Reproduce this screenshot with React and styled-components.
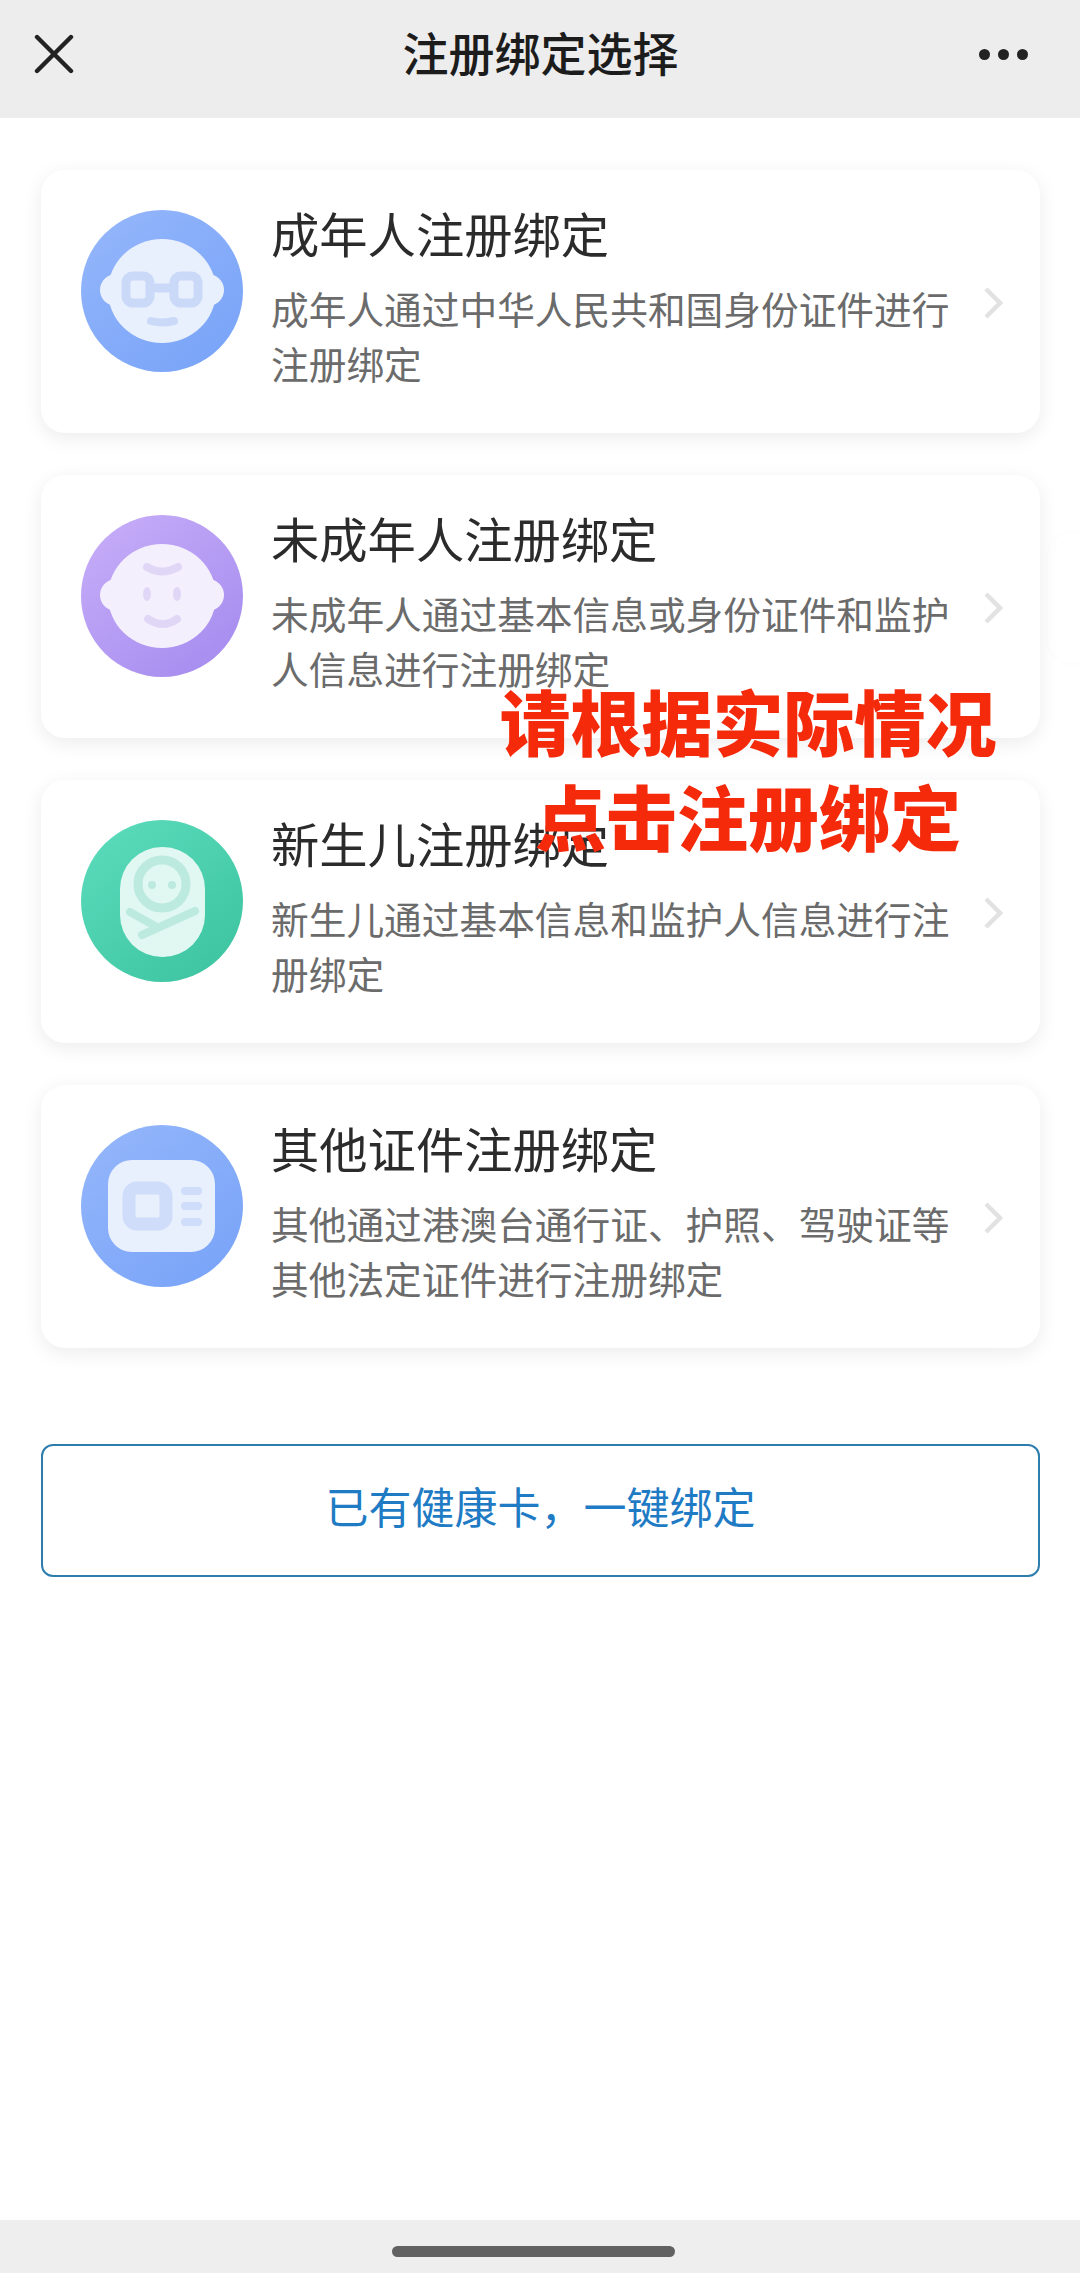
import styled, { createGlobalStyle } from 'styled-components'

const GlobalStyle = createGlobalStyle`
    html, body {
        margin: 0;
        padding: 0;
        background: #fff;
    }
    body {
        font-family: "Noto Sans CJK SC", "Liberation Sans", sans-serif;
    }
`

const cards = [
    { title: '成年人注册绑定', desc: '成年人通过中华人民共和国身份证件进行注册绑定', icon: 'adult' },
    { title: '未成年人注册绑定', desc: '未成年人通过基本信息或身份证件和监护人信息进行注册绑定', icon: 'minor' },
    { title: '新生儿注册绑定', desc: '新生儿通过基本信息和监护人信息进行注册绑定', icon: 'baby' },
    { title: '其他证件注册绑定', desc: '其他通过港澳台通行证、护照、驾驶证等其他法定证件进行注册绑定', icon: 'card' },
]

const Disc = ({ id, from, to, children }) => (
    <IconSvg viewBox="0 0 162 162">
        <defs>
            <linearGradient id={id} x1="0.1" y1="0" x2="0.9" y2="1">
                <stop offset="0" stopColor={from} />
                <stop offset="1" stopColor={to} />
            </linearGradient>
        </defs>
        <circle cx="81" cy="81" r="81" fill={`url(#${id})`} />
        {children}
    </IconSvg>
)

const Head = ({ fill }) => (
    <g fill={fill}>
        <circle cx="35" cy="80" r="16" />
        <circle cx="127" cy="80" r="16" />
        <ellipse cx="81" cy="81" rx="54" ry="52" />
    </g>
)

const icons = {
    adult: (
        <Disc id="adultGrad" from="#94b6fb" to="#78a3f8">
            <Head fill="#e9f0fd" />
            <g fill="none" stroke="#cbd9f9" strokeWidth="9" strokeLinecap="round">
                <rect x="45" y="66" width="24" height="27" rx="7" />
                <rect x="93" y="66" width="24" height="27" rx="7" />
                <path d="M69 78h24" />
                <path d="M70 111q11 3 23 0" strokeWidth="8" />
            </g>
        </Disc>
    ),
    minor: (
        <Disc id="minorGrad" from="#c7adf8" to="#a48bef">
            <Head fill="#f4effd" />
            <g fill="none" stroke="#e0d7f7" strokeLinecap="round" strokeWidth="8">
                <path d="M66 52q15 9 31 0" />
                <path d="M67 104q15 10 29 0" />
            </g>
            <ellipse cx="66" cy="79" rx="4" ry="7" fill="#e0d7f7" />
            <ellipse cx="96" cy="79" rx="4" ry="7" fill="#e0d7f7" />
        </Disc>
    ),
    baby: (
        <Disc id="babyGrad" from="#5bdcbc" to="#3cc39f">
            <rect x="39" y="27" width="85" height="110" rx="42" fill="#e1f7f2" />
            <circle cx="81" cy="64" r="24" fill="none" stroke="#bdeade" strokeWidth="9" />
            <circle cx="71" cy="65" r="4" fill="#bdeade" />
            <circle cx="91" cy="65" r="4" fill="#bdeade" />
            <g fill="none" stroke="#bdeade" strokeWidth="8" strokeLinecap="round">
                <path d="M49 92l25 14" />
                <path d="M61 115l53-24" />
            </g>
        </Disc>
    ),
    card: (
        <Disc id="cardGrad" from="#94b6fb" to="#78a3f8">
            <rect x="27" y="35" width="107" height="92" rx="24" fill="#e9f0fd" />
            <rect x="48" y="63" width="37" height="36" rx="8" fill="#e9f0fd" stroke="#cfdcfa" strokeWidth="13" />
            <g stroke="#cfdcfa" strokeWidth="8" strokeLinecap="round">
                <path d="M104 66h13" />
                <path d="M104 81h13" />
                <path d="M104 97h13" />
            </g>
        </Disc>
    ),
}

export default function App() {
    return (
        <Page>
            <GlobalStyle />
            <Header>
                <svg width="40" height="40" viewBox="0 0 40 40">
                    <path d="M3 3L37 37M37 3L3 37" stroke="#222" strokeWidth="4.4" strokeLinecap="round" />
                </svg>
                <HeaderTitle>注册绑定选择</HeaderTitle>
                <Dots>
                    <i /><i /><i />
                </Dots>
            </Header>
            <Main>
                <CardList>
                    {cards.map((card) => (
                        <Card key={card.title}>
                            {icons[card.icon]}
                            <CardText>
                                <CardTitle>{card.title}</CardTitle>
                                <CardDesc>{card.desc}</CardDesc>
                            </CardText>
                            <Chevron viewBox="0 0 20 32">
                                <path d="M3 2l14 14L3 30" fill="none" stroke="#e2e2e2" strokeWidth="4.5" />
                            </Chevron>
                        </Card>
                    ))}
                </CardList>
                <BindButton>已有健康卡，一键绑定</BindButton>
                <Notice>
                    <span>请根据实际情况</span>
                    <span>点击注册绑定</span>
                </Notice>
                <EdgeGhost />
            </Main>
            <Footer>
                <HomeBar />
            </Footer>
        </Page>
    )
}

const Page = styled.div`
    width: 1080px;
    height: 2273px;
    display: flex;
    flex-direction: column;
    background: #fff;
    overflow: hidden;
`

const Header = styled.header`
    height: 118px;
    flex: none;
    display: flex;
    align-items: center;
    justify-content: space-between;
    box-sizing: border-box;
    padding: 0 52px 10px 34px;
    background: #ededed;
`

const HeaderTitle = styled.h1`
    margin: 0 0 6px 28px;
    font-size: 46px;
    font-weight: 500;
    line-height: 60px;
    color: #1c1c1c;
`

const Dots = styled.div`
    display: flex;
    gap: 8px;
    i {
        width: 11px;
        height: 11px;
        border-radius: 50%;
        background: #222;
    }
`

const Main = styled.main`
    flex: 1;
    position: relative;
    box-sizing: border-box;
    padding: 52px 40px 0 41px;
`

const CardList = styled.div`
    display: flex;
    flex-direction: column;
    gap: 42px;
`

const Card = styled.div`
    height: 263px;
    box-sizing: border-box;
    padding: 40px 0 0 40px;
    display: flex;
    align-items: flex-start;
    background: #fff;
    border-radius: 24px;
    box-shadow: 0 5px 20px rgba(0, 0, 0, 0.08);
`

const IconSvg = styled.svg`
    width: 162px;
    height: 162px;
    flex: none;
`

const CardText = styled.div`
    width: 690px;
    margin-left: 28px;
    flex: none;
`

const CardTitle = styled.div`
    font-size: 48.3px;
    line-height: 44px;
    color: #2b2b2b;
`

const CardDesc = styled.div`
    margin-top: 26px;
    font-size: 37.7px;
    line-height: 55px;
    color: #6b6b6b;
`

const Chevron = styled.svg`
    width: 20px;
    height: 32px;
    flex: none;
    margin: 77px 0 0 22px;
`

const BindButton = styled.button`
    display: block;
    width: 100%;
    height: 133px;
    margin-top: 96px;
    padding: 0 0 12px;
    background: #fff;
    border: 2px solid #2d7ead;
    border-radius: 12px;
    font-family: inherit;
    font-size: 43px;
    color: #1f7bc4;
`

const Notice = styled.div`
    position: absolute;
    top: 566px;
    left: 480px;
    width: 536px;
    display: flex;
    flex-direction: column;
    align-items: center;
    gap: 25px;
    font-size: 71px;
    font-weight: 900;
    line-height: 70px;
    color: #f42a0b;
`

const EdgeGhost = styled.div`
    position: absolute;
    top: 415px;
    left: 1048px;
    width: 60px;
    height: 130px;
    border-radius: 24px;
    box-shadow: 0 0 6px rgba(0, 0, 0, 0.025);
`

const Footer = styled.footer`
    height: 53px;
    flex: none;
    display: flex;
    justify-content: center;
    padding-top: 26px;
    box-sizing: border-box;
    background: #eeeeee;
`

const HomeBar = styled.div`
    width: 283px;
    height: 11px;
    margin-right: 13px;
    border-radius: 6px;
    background: #616161;
`
